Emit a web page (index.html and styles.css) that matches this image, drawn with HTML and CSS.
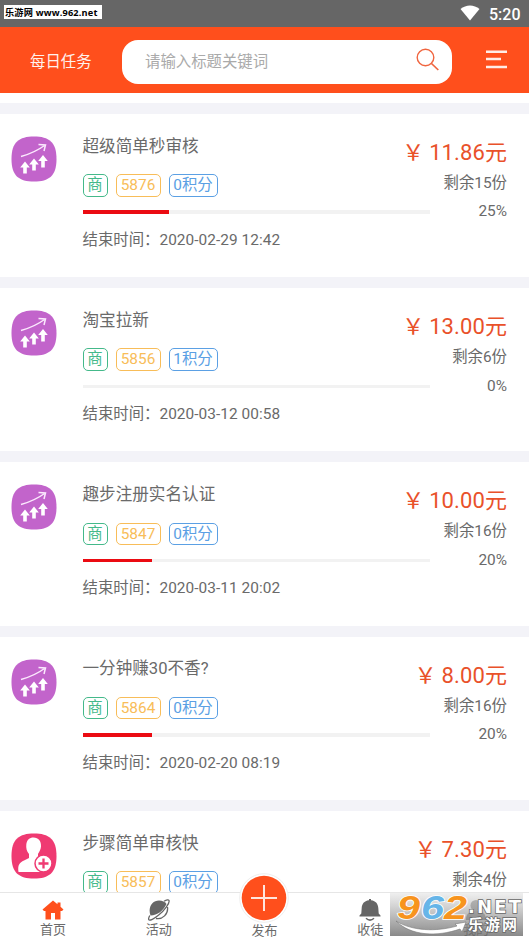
FILE: index.html
```html
<!DOCTYPE html>
<html lang="zh-CN">
<head>
<meta charset="utf-8">
<title>每日任务</title>
<link rel="stylesheet" href="styles.css">
</head>
<body>
<svg class="defs" aria-hidden="true">
  <symbol id="growth" viewBox="0 0 46 46">
    <path fill="#c264cb" d="M23 .5C38 .5 45.5 6 45.5 23S38 45.500 23 45.500.5 40 .5 23 8 .5 23 .5Z"/>
    <path fill="none" stroke="#fbe9fd" stroke-width="1.500" d="M10 20.500C19 18 26 15 33.500 9.500M27.500 8.500 34.500 9 33 15"/>
    <path fill="#fff" d="M14 25.500 18.800 31.500H15.800V37.500H12.200V31.500H9.200ZM23 22.500 27.800 28.500H24.800V34.500H21.200V28.500H18.200ZM32 19 36.800 25H33.800V31.500H30.200V25H27.200Z"/>
  </symbol>
  <symbol id="invite" viewBox="0 0 46 46">
    <path fill="#ef3a72" d="M23 .5C38 .5 45.500 6 45.500 23S38 45.500 23 45.500.5 40 .5 23 8 .5 23 .5Z"/>
    <path fill="#fff" d="M22.500 4.500C27.500 4.500 30.300 8 30 13.500 29.800 17 28 19 27 21V24.500L31 26.500 33 39H7.500C6.500 32 8.500 29.500 13 27.500L18 25V21C15.500 18 15 15 15.300 11.500 15.800 7 18.500 4.500 22.500 4.500Z"/>
    <circle cx="32.500" cy="30.500" r="8.500" fill="#fff" stroke="#ef3a72" stroke-width="1.500"/>
    <path stroke="#ef3a72" stroke-width="2.300" d="M27.500 30.500H37.500M32.500 25.500V35.500"/>
  </symbol>
</svg>
<div class="screen">
  <div class="status">
    <span class="site">乐游网 www.962.net</span>
    <svg class="wifi" viewBox="0 0 20 16"><path fill="#fff" d="M.5 4C6-.7 14-.7 19.500 4L10 15.500Z"/></svg>
    <span class="clock">5:20</span>
  </div>
  <header class="header">
    <span class="heading">每日任务</span>
    <div class="search">
      <span>请输入标题关键词</span>
      <svg class="glass" viewBox="0 0 24 24"><g fill="none" stroke="#f0653f" stroke-width="1.400"><circle cx="9.500" cy="9.500" r="8.300"/><path stroke-width="1.700" d="M15.500 15.500 22.300 22"/></g></svg>
    </div>
    <svg class="menu" viewBox="0 0 21 19"><path stroke="#ffece6" stroke-width="2.400" d="M0 1.700H21M0 9H15M0 17H21"/></svg>
  </header>
  <main class="list">
    <article class="card">
      <svg class="icon"><use href="#growth"/></svg>
      <div class="info"><h2>超级简单秒审核</h2><div class="tags"><span class="tag green">商</span><span class="tag amber">5876</span><span class="tag blue">0积分</span></div><div class="bar"><i style="width:25%"></i></div><p>结束时间：<span>2020-02-29 12:42</span></p></div>
      <div class="side"><b>￥<span>11.86元</span></b><p>剩余15份</p><p>25%</p></div>
    </article>
    <article class="card">
      <svg class="icon"><use href="#growth"/></svg>
      <div class="info"><h2>淘宝拉新</h2><div class="tags"><span class="tag green">商</span><span class="tag amber">5856</span><span class="tag blue">1积分</span></div><div class="bar"><i style="width:0%"></i></div><p>结束时间：<span>2020-03-12 00:58</span></p></div>
      <div class="side"><b>￥<span>13.00元</span></b><p>剩余6份</p><p>0%</p></div>
    </article>
    <article class="card">
      <svg class="icon"><use href="#growth"/></svg>
      <div class="info"><h2>趣步注册实名认证</h2><div class="tags"><span class="tag green">商</span><span class="tag amber">5847</span><span class="tag blue">0积分</span></div><div class="bar"><i style="width:20%"></i></div><p>结束时间：<span>2020-03-11 20:02</span></p></div>
      <div class="side"><b>￥<span>10.00元</span></b><p>剩余16份</p><p>20%</p></div>
    </article>
    <article class="card">
      <svg class="icon"><use href="#growth"/></svg>
      <div class="info"><h2>一分钟赚30不香?</h2><div class="tags"><span class="tag green">商</span><span class="tag amber">5864</span><span class="tag blue">0积分</span></div><div class="bar"><i style="width:20%"></i></div><p>结束时间：<span>2020-02-20 08:19</span></p></div>
      <div class="side"><b>￥<span>8.00元</span></b><p>剩余16份</p><p>20%</p></div>
    </article>
    <article class="card">
      <svg class="icon"><use href="#invite"/></svg>
      <div class="info"><h2>步骤简单审核快</h2><div class="tags"><span class="tag green">商</span><span class="tag amber">5857</span><span class="tag blue">0积分</span></div></div>
      <div class="side"><b>￥<span>7.30元</span></b><p>剩余4份</p></div>
    </article>
  </main>
  <nav class="nav">
    <a><svg viewBox="0 0 22 22"><path fill="#ff4f1c" d="M11 1.500 15.500 5.300V3.500H18.500V7.800L21.500 10.500 20 12H18.500V20.500H13V14H9V20.500H3.500V12H2L.5 10.500Z"/></svg><span>首页</span></a>
    <a><svg viewBox="0 0 22 22"><path fill="#666" d="M2.500 16.500C-.5 8 4.500 1.500 11 1.500 14.500 1.500 17 3 18.500 5 15.500 11.500 9.500 16.500 2.500 16.500Z"/><path fill="none" stroke="#666" stroke-width="1.300" d="M16 2.300C18.500.7 20.500.3 21 1.500 22 4 16.500 11.500 11 15.800 6 20 1.500 22 .8 20.700.3 19.800.8 18.300 1.800 16.500M19.500 8C20.500 15 14.500 20.800 8 19.500"/></svg><span>活动</span></a>
    <a class="publish"><svg viewBox="0 0 50 50"><circle cx="25" cy="25" r="24.300" fill="#fff" stroke="#eee"/><circle cx="25" cy="25" r="22.300" fill="#ff4f1c"/><path stroke="#ffe5dd" stroke-width="2" d="M12 25H38M25 12V38"/></svg><span>发布</span></a>
    <a><svg viewBox="0 0 22 22"><path fill="#666" d="M10 0H12V1.300C17 2 19 5 19.300 9L19.700 14.500 21.500 16.500V17.500H.5V16.500L2.300 14.500 2.700 9C3 5 5 2 10 1.300Z"/><path fill="none" stroke="#666" stroke-width="1.500" d="M7 19.300Q11 23 15 19.300"/></svg><span>收徒</span></a>
    <a><svg viewBox="0 0 22 22"><circle cx="11" cy="6.500" r="5.500" fill="#666"/><path fill="#666" d="M1 21C1 14 5 12 11 12S21 14 21 21Z"/></svg><span>我的</span></a>
  </nav>
  <div class="watermark">
    <svg viewBox="0 0 133 43">
      <defs><linearGradient id="shade" x1="0" y1="0" x2="0" y2="1"><stop offset="0" stop-color="#e6e6e6" stop-opacity=".65"/><stop offset=".5" stop-color="#aaa" stop-opacity=".75"/><stop offset="1" stop-color="#6c6c6c" stop-opacity=".8"/></linearGradient></defs>
      <path fill="url(#shade)" d="M0 0H133V43H0Z"/>
      <path fill="#fff" stroke="#777" stroke-width=".6" d="M6 28C22 38 46 39 67 33L65 31 76 29 72 39 70 36C47 44 21 43 6 28Z"/>
      <g class="digits"><text x="7" y="25.500" textLength="23" lengthAdjust="spacingAndGlyphs" fill="#f7941e">9</text><text x="31" y="25.500" textLength="23" lengthAdjust="spacingAndGlyphs" fill="#66b5e8">6</text><text x="54" y="25.500" textLength="23" lengthAdjust="spacingAndGlyphs" fill="#f7941e">2</text></g>
      <text class="net" x="78" y="20" textLength="53">.NET</text>
      <text class="brand" x="78" y="37" textLength="49">乐游网</text>
    </svg>
  </div>
</div>
</body>
</html>
```
FILE: styles.css
```css
* { box-sizing: border-box; }
body { margin: 0; background: #fff; color: #6a6a6a; font-family: Roboto, "Noto Sans CJK SC", sans-serif; font-size: 15.4px; }
h2, p { margin: 0; font-weight: 400; }
svg { display: block; }
.defs { position: absolute; width: 0; height: 0; }
.screen { position: relative; height: 941px; overflow: hidden; display: flex; flex-direction: column; }
.status { flex: 0 0 27px; display: flex; align-items: flex-start; background: #666; color: #fff; }
.site { width: 98px; height: 14px; margin: 5px 0 0 4px; padding-left: 1px; background: #fff; color: #000; font: 700 9.2px/15px "Open Sans", "Noto Sans CJK SC", sans-serif; letter-spacing: .17px; white-space: nowrap; }
.wifi { width: 20px; height: 16px; margin: 5px 8px 0 auto; }
.clock { width: 41px; padding-left: 1px; font-size: 16px; font-weight: 500; line-height: 27px; padding-top: 1px; height: 27px; }
.header { flex: 0 0 66.300px; display: flex; align-items: center; background: #ff4f1c; padding: 0 21px 0 30px; color: #fff1ed; }
.heading { width: 92px; line-height: 22px; margin-top: 3px; }
.search { width: 330px; height: 44px; margin-top: 4px; border-radius: 16px; background: #fff; color: #aaa; display: flex; align-items: center; justify-content: space-between; padding: 0 12px 4px 23px; }
.glass { width: 24px; height: 24px; }
.menu { width: 21px; height: 19px; margin: -1px 1px 0 auto; }
.list { flex: 1; min-height: 0; padding-top: 9.700px; overflow: hidden; }
.card { height: 174.200px; border-top: 11px solid #f3f3f8; display: flex; padding: 0 22px 0 11px; }
.icon { width: 46px; height: 46px; margin: 22px 25.500px 0 0; flex: none; }
.info { flex: 0 0 347px; padding-top: 20.800px; }
h2 { font-size: 16.6px; line-height: 24px; height: 24px; }
.tags { display: flex; gap: 8px; margin-top: 15.500px; height: 23px; }
.tag { height: 22.500px; border: 1.300px solid; border-radius: 5px; line-height: 20px; text-align: center; font-size: 15.4px; white-space: nowrap; }
.green { width: 25px; color: #44b98a; }
.amber { width: 45px; color: #f8bd59; }
.blue { width: 49px; color: #5ba0e4; }
.bar { height: 3.500px; margin: 13.200px 0 15px; background: #f2f2f2; }
.bar i { display: block; height: 100%; background: #eb0b12; }
.info p { line-height: 22px; white-space: nowrap; }
.info p span { letter-spacing: .05px; }
.side { flex: 1; min-width: 0; display: flex; flex-direction: column; align-items: flex-end; padding-top: 24px; white-space: nowrap; }
.side b { display: flex; justify-content: flex-end; color: #e9512a; font-weight: 400; font-size: 22px; line-height: 30px; height: 30px; }
.side b span { letter-spacing: .1px; margin-left: 5px; }
.side p { line-height: 22px; margin-top: 4px; }
.side p + p { margin-top: 6.500px; }
.nav { flex: 0 0 49px; border-top: 1px solid #e6e6e6; display: grid; grid-template-columns: repeat(5, 1fr); background: #fff; font-size: 13px; }
.nav a { display: flex; flex-direction: column; align-items: center; line-height: 18px; }
.nav svg { width: 22px; height: 22px; margin-top: 6px; flex: none; }
.nav .publish svg { width: 50px; height: 50px; margin: -20px 0 0; }
.nav .publish span { margin-top: -1px; }
.watermark { position: absolute; left: 390px; top: 893px; width: 133px; height: 43px; }
.watermark svg { width: 133px; height: 43px; overflow: visible; }
.digits { font: italic 700 33px "Liberation Sans", sans-serif; stroke: #fff; stroke-width: 1.6px; paint-order: stroke; }
.net { font: 700 18px "DejaVu Sans", sans-serif; fill: #fff; stroke: #666; stroke-width: 1.5px; paint-order: stroke; }
.brand { font: 700 15px "Noto Sans CJK SC", sans-serif; fill: #fff; stroke: #666; stroke-width: 1.5px; paint-order: stroke; }
```
